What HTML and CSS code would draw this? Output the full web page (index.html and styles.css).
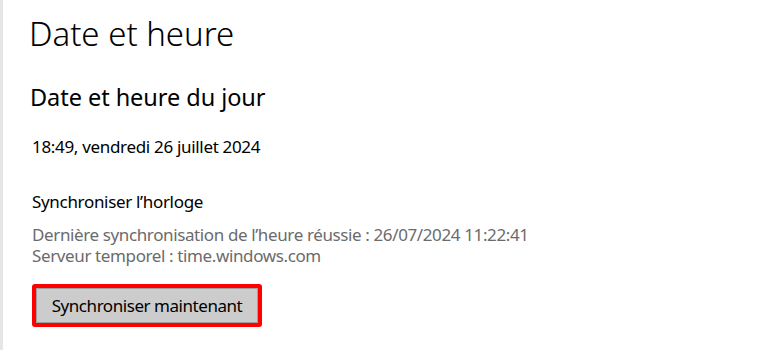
FILE: index.html
```html
<!DOCTYPE html>
<html lang="fr">
<head>
<meta charset="utf-8">
<link rel="stylesheet" href="styles.css">
</head>
<body>
<div class="page">
  <div class="strip"></div>
  <main class="content">
    <h1 class="title">Date et heure</h1>
    <h2 class="subtitle">Date et heure du jour</h2>
    <p class="now">18:49, vendredi 26 juillet 2024</p>
    <p class="label">Synchroniser l’horloge</p>
    <p class="info">Dernière synchronisation de l’heure réussie : 26/07/2024 11:22:41<br>Serveur temporel : time.windows.com</p>
    <div class="highlight"><button class="btn">Synchroniser maintenant</button></div>
  </main>
</div>
</body>
</html>
```
FILE: styles.css
```css
html, body { margin: 0; padding: 0; background: #fff; }
body { font-family: "Noto Sans", "Open Sans", sans-serif; color: #000; }
.page { display: flex; height: 350px; }
.strip { width: 3px; background: #e6e6e6; flex: none; }
.content { padding-left: 27px; }
.title { font-weight: 300; font-size: 33px; letter-spacing: 0; margin: 13.5px 0 0 -1px; line-height: 40px; }
.subtitle { font-weight: 400; font-size: 23.5px; letter-spacing: -0.05px; margin: 28.2px 0 0 0; line-height: 30px; }
.now { font-size: 17px; letter-spacing: -0.32px; margin: 24.8px 0 0 2px; line-height: 22px; }
.label { font-size: 17px; letter-spacing: -0.32px; margin: 32.7px 0 0 2px; line-height: 22px; }
.info { font-size: 17px; letter-spacing: -0.38px; margin: 11px 0 0 2px; line-height: 21px; color: #6b6b6b; }
.highlight { display: inline-block; margin: 17.7px 0 0 2px; border: 4px solid #ff0000; border-radius: 3px; }
.btn { display: block; font-family: inherit; font-size: 17px; letter-spacing: -0.45px; color: #000; background: #cccccc; border: 1px solid #a0a0a0; padding: 0 8px; height: 35px; width: 222px; margin: 0; }
```
